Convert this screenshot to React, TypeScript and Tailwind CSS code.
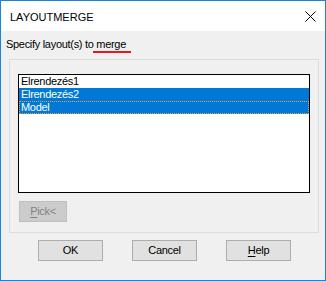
import React from "react";

const font = { fontFamily: '"Liberation Sans", Arial, sans-serif' };

function Btn({ children, className = "" }: { children: React.ReactNode; className?: string }) {
  return (
    <div
      className={
        "flex h-[21px] w-[65px] items-center justify-center border border-[#adadad] bg-[#e1e1e1] text-[11px] leading-[13px] text-black " +
        className
      }
    >
      {children}
    </div>
  );
}

export default function App() {
  return (
    <div
      className="flex h-[281px] w-[326px] flex-col border border-[#1883d7] bg-[#f0f0f0] tracking-[-0.3px] text-black"
      style={font}
    >
      <div className="flex h-[30px] shrink-0 items-center justify-between bg-white pl-[9px] pr-[9px]">
        <span className="mt-[2px] text-[11px] leading-[13px] tracking-[0px]">LAYOUTMERGE</span>
        <svg width="11" height="11" viewBox="0 0 11 11" className="mt-[1px]">
          <path d="M0.5 0.5 L10.5 10.5 M10.5 0.5 L0.5 10.5" stroke="#000" strokeWidth="1" />
        </svg>
      </div>

      <div className="ml-[5px] mt-[7px] text-[11px] leading-[13px]">
        Specify layout(s) to{" "}
        <span className="relative">
          merge
          <span className="absolute left-[-3px] right-[-5px] top-[13px] h-[2px] bg-[#e8191e]" />
        </span>
      </div>

      <div className="ml-[8px] mt-[8px] flex h-[174px] w-[310px] flex-col border border-[#dcdcdc] pl-[8px] pt-[14px]">
        <div className="flex h-[119px] w-[292px] flex-col border border-black bg-white text-[11px] leading-[13px]">
          <div className="h-[13px] pl-[2px]">Elrendezés1</div>
          <div className="h-[13px] bg-[#0078d7] pl-[2px] text-white">Elrendezés2</div>
          <div className="h-[13px] border border-dotted border-[#f0a030] bg-[#0078d7] pl-[1px] leading-[11px] text-white">
            Model
          </div>
        </div>
        <div className="ml-[1px] mt-[8px] flex h-[21px] w-[48px] items-center justify-center border border-[#bfbfbf] bg-[#cccccc] text-[11px] leading-[13px] text-[#838383]">
          <span className="underline underline-offset-2">P</span>ick&lt;
        </div>
      </div>

      <div className="ml-[37px] mt-[7px] flex gap-[29px]">
        <Btn>OK</Btn>
        <Btn>Cancel</Btn>
        <Btn>
          <span className="underline underline-offset-2">H</span>elp
        </Btn>
      </div>
    </div>
  );
}
